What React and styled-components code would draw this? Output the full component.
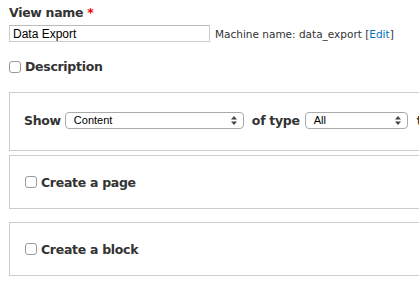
import styled, { createGlobalStyle } from 'styled-components'

const Global = createGlobalStyle`
  body {
    margin: 0;
    background: #fff;
    overflow: hidden;
  }
`

const Page = styled.div`
  width: 720px;
  padding: 5px 0 0 9px;
  font-family: 'DejaVu Sans', Verdana, sans-serif;
  color: #333;
`

const FieldLabel = styled.label`
  display: block;
  font-size: 12.5px;
  font-weight: bold;
  letter-spacing: -0.3px;
  line-height: 16px;
  margin-bottom: 4px;

  & span {
    color: #e00;
    margin-left: 4px;
  }
`

const NameRow = styled.div`
  display: flex;
  align-items: center;
`

const TextInput = styled.input`
  box-sizing: border-box;
  width: 201px;
  height: 17px;
  padding: 0 3px;
  border: 1px solid #ccc;
  border-top-color: #bbb;
  font-family: 'Liberation Sans', Arial, sans-serif;
  font-size: 12px;
  color: #000;
  outline: none;
`

const Machine = styled.span`
  margin-left: 5px;
  font-size: 10.5px;
  color: #333;

  & a {
    color: #0074bd;
    text-decoration: none;
  }
`

const CheckRow = styled.label`
  display: flex;
  align-items: center;
  gap: 4px;
  font-size: 12.5px;
  font-weight: bold;
  letter-spacing: -0.3px;
  margin: ${({ $top }) => $top || 0}px 0 0;
`

const Box = styled.span`
  box-sizing: border-box;
  width: 12px;
  height: 12px;
  border: 1px solid #9a9a9a;
  border-radius: 3px;
  background: #fff;
`

const Fieldset = styled.div`
  box-sizing: border-box;
  height: ${({ $h }) => $h}px;
  margin-top: ${({ $gap }) => $gap}px;
  border: 1px solid #ccc;
  padding: 0 0 ${({ $pb }) => $pb || 0}px ${({ $pad }) => $pad}px;
  display: flex;
  align-items: center;
`

const Inline = styled.div`
  display: flex;
  align-items: center;
  font-size: 12.5px;
  font-weight: bold;
  letter-spacing: -0.3px;
  white-space: nowrap;
`

const Select = styled.div`
  box-sizing: border-box;
  width: ${({ $w }) => $w}px;
  height: 17px;
  margin: 0 ${({ $mr }) => $mr}px 0 ${({ $ml }) => $ml}px;
  padding: 0 6px 0 8px;
  border: 1px solid #aaa;
  border-radius: 4px;
  display: flex;
  align-items: center;
  justify-content: space-between;
  font-family: 'Liberation Sans', Arial, sans-serif;
  font-size: 11px;
  font-weight: normal;
  letter-spacing: 0;
  color: #000;
`

const Arrows = () => (
  <svg width="6" height="9" viewBox="0 0 6 9">
    <path d="M3 0 L6 3.5 L0 3.5 Z M3 9 L6 5.5 L0 5.5 Z" fill="#444" />
  </svg>
)

export default function App() {
  return (
    <Page>
      <Global />
      <FieldLabel>
        View name<span>*</span>
      </FieldLabel>
      <NameRow>
        <TextInput defaultValue="Data Export" />
        <Machine>
          Machine name: data_export [<a href="#">Edit</a>]
        </Machine>
      </NameRow>
      <CheckRow $top={17}>
        <Box />
        Description
      </CheckRow>
      <Fieldset $h={59} $gap={18} $pad={14} $pb={3}>
        <Inline>
          Show
          <Select $w={179} $ml={4} $mr={8}>
            Content
            <Arrows />
          </Select>
          of type
          <Select $w={103} $ml={5} $mr={9}>
            All
            <Arrows />
          </Select>
          tagged with
        </Inline>
      </Fieldset>
      <Fieldset $h={54} $gap={4} $pad={15}>
        <CheckRow>
          <Box />
          Create a page
        </CheckRow>
      </Fieldset>
      <Fieldset $h={54} $gap={13} $pad={15}>
        <CheckRow>
          <Box />
          Create a block
        </CheckRow>
      </Fieldset>
    </Page>
  )
}
